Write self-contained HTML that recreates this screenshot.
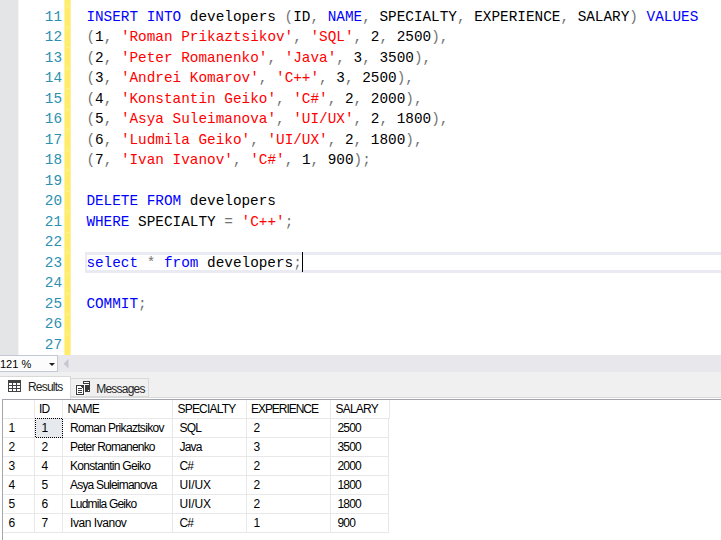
<!DOCTYPE html>
<html><head><meta charset="utf-8">
<style>
html,body{margin:0;padding:0;}
body{width:721px;height:540px;overflow:hidden;position:relative;background:#fff;font-family:"Liberation Sans",sans-serif;}
.a{position:absolute;}
#gut{left:0;top:0;width:19px;height:355px;background:linear-gradient(to right,#e4e5e7 18px,#f4f5f5 18px);}
#yb{left:64px;top:0;width:7px;height:355px;background:linear-gradient(to right,#fff3a6 0,#fff3a6 1px,#ffec6a 1px,#ffec6a 6px,#fff1a0 6px);overflow:hidden;}
.sep{position:absolute;left:0;width:7px;height:1px;background:#ffef92;}
.ln{position:absolute;left:0;width:62px;text-align:right;font-family:"Liberation Mono",monospace;font-size:14.36px;color:#2b91af;height:20.5px;line-height:20.5px;white-space:pre;}
.cl{position:absolute;left:86.4px;font-family:"Liberation Mono",monospace;font-size:14.36px;color:#000;height:20.5px;line-height:20.5px;white-space:pre;}
.k{color:#0000ff}.s{color:#ff0000}.g{color:#747474}
#cur{left:85px;top:252px;width:640px;height:15px;border:2px solid #eaeaf2;border-top-width:3px;border-bottom-width:3px;}
#caret{left:302px;top:252px;width:1px;height:20px;background:#000;}
#zb{left:0;top:355px;width:721px;height:17px;background:#e8e8ec;}
#zc{left:-1px;top:355px;width:57px;height:15px;border:1px solid #c2c8d8;background:#fcfcfc;}
#zt{position:absolute;left:0px;top:3px;font-size:11px;line-height:11px;color:#000;white-space:pre;}
#tabr{left:0;top:376px;width:71px;height:23px;background:#fff;border-top:1px solid #d9d9d9;border-right:1px solid #d9d9d9;box-sizing:border-box;}
#tabline{left:71px;top:397px;width:650px;height:2px;background:#fff;border-top:1px solid #dadada;box-sizing:border-box;}
#tabm{left:70px;top:378px;width:79px;height:19px;background:#f0f0f0;border:1px solid #d9d9d9;box-sizing:border-box;}
.tt{font-size:12px;line-height:12px;color:#1e1e1e;white-space:pre;letter-spacing:-0.8px;}
.gt{font-size:12px;line-height:12px;color:#000;white-space:pre;letter-spacing:-0.8px;}
.gl{background:#e8e8e8;}
#sel{left:35px;top:418px;width:26px;height:18px;background:#e6e9ee;border:1px dotted #000;}

#bot{left:0;top:372px;width:721px;height:168px;background:#f0f0f0;}
#grid{left:0;top:399px;width:721px;height:141px;background:#fff;border-top:1px solid #a4a6ad;box-sizing:border-box;}
#gfix{left:0;top:399px;width:2px;height:1px;background:#fff;}
</style></head><body>
<div class="a" id="gut"></div>
<div class="a" id="cur"></div>
<div class="a" id="yb"><div class="sep" style="top:6.0px"></div><div class="sep" style="top:26.5px"></div><div class="sep" style="top:47.0px"></div><div class="sep" style="top:67.5px"></div><div class="sep" style="top:88.0px"></div><div class="sep" style="top:108.5px"></div><div class="sep" style="top:129.0px"></div><div class="sep" style="top:149.5px"></div><div class="sep" style="top:170.0px"></div><div class="sep" style="top:190.5px"></div><div class="sep" style="top:211.0px"></div><div class="sep" style="top:231.5px"></div><div class="sep" style="top:252.0px"></div><div class="sep" style="top:272.5px"></div><div class="sep" style="top:293.0px"></div><div class="sep" style="top:313.5px"></div><div class="sep" style="top:334.0px"></div><div class="sep" style="top:354.5px"></div></div>
<div class="ln" style="top:7.00px">11</div>
<div class="cl" style="top:7.00px"><span class="k">INSERT INTO</span> developers <span class="g">(</span>ID<span class="g">,</span> <span class="k">NAME</span><span class="g">,</span> SPECIALTY<span class="g">,</span> EXPERIENCE<span class="g">,</span> SALARY<span class="g">)</span> <span class="k">VALUES</span></div>
<div class="ln" style="top:27.00px">12</div>
<div class="cl" style="top:27.00px"><span class="g">(</span>1<span class="g">,</span> <span class="s">'Roman Prikaztsikov'</span><span class="g">,</span> <span class="s">'SQL'</span><span class="g">,</span> 2<span class="g">,</span> 2500<span class="g">),</span></div>
<div class="ln" style="top:48.00px">13</div>
<div class="cl" style="top:48.00px"><span class="g">(</span>2<span class="g">,</span> <span class="s">'Peter Romanenko'</span><span class="g">,</span> <span class="s">'Java'</span><span class="g">,</span> 3<span class="g">,</span> 3500<span class="g">),</span></div>
<div class="ln" style="top:68.00px">14</div>
<div class="cl" style="top:68.00px"><span class="g">(</span>3<span class="g">,</span> <span class="s">'Andrei Komarov'</span><span class="g">,</span> <span class="s">'C++'</span><span class="g">,</span> 3<span class="g">,</span> 2500<span class="g">),</span></div>
<div class="ln" style="top:89.00px">15</div>
<div class="cl" style="top:89.00px"><span class="g">(</span>4<span class="g">,</span> <span class="s">'Konstantin Geiko'</span><span class="g">,</span> <span class="s">'C#'</span><span class="g">,</span> 2<span class="g">,</span> 2000<span class="g">),</span></div>
<div class="ln" style="top:109.00px">16</div>
<div class="cl" style="top:109.00px"><span class="g">(</span>5<span class="g">,</span> <span class="s">'Asya Suleimanova'</span><span class="g">,</span> <span class="s">'UI/UX'</span><span class="g">,</span> 2<span class="g">,</span> 1800<span class="g">),</span></div>
<div class="ln" style="top:130.00px">17</div>
<div class="cl" style="top:130.00px"><span class="g">(</span>6<span class="g">,</span> <span class="s">'Ludmila Geiko'</span><span class="g">,</span> <span class="s">'UI/UX'</span><span class="g">,</span> 2<span class="g">,</span> 1800<span class="g">),</span></div>
<div class="ln" style="top:150.00px">18</div>
<div class="cl" style="top:150.00px"><span class="g">(</span>7<span class="g">,</span> <span class="s">'Ivan Ivanov'</span><span class="g">,</span> <span class="s">'C#'</span><span class="g">,</span> 1<span class="g">,</span> 900<span class="g">);</span></div>
<div class="ln" style="top:171.00px">19</div>
<div class="ln" style="top:191.00px">20</div>
<div class="cl" style="top:191.00px"><span class="k">DELETE FROM</span> developers</div>
<div class="ln" style="top:212.00px">21</div>
<div class="cl" style="top:212.00px"><span class="k">WHERE</span> SPECIALTY <span class="g">=</span> <span class="s">'C++'</span><span class="g">;</span></div>
<div class="ln" style="top:232.00px">22</div>
<div class="ln" style="top:253.00px">23</div>
<div class="cl" style="top:253.00px"><span class="k">select</span> <span class="g">*</span> <span class="k">from</span> developers<span class="g">;</span></div>
<div class="ln" style="top:273.00px">24</div>
<div class="ln" style="top:294.00px">25</div>
<div class="cl" style="top:294.00px"><span class="k">COMMIT</span><span class="g">;</span></div>
<div class="ln" style="top:314.00px">26</div>
<div class="ln" style="top:335.00px">27</div>
<div class="a" id="caret"></div>
<div class="a" id="zb"></div>
<div class="a" id="zc"><span id="zt">121 %</span><svg class="a" style="left:49px;top:7px" width="6" height="3"><path d="M0 0H6L3 3Z" fill="#1e1e1e"/></svg></div>
<svg class="a" style="left:63px;top:359px" width="6" height="10"><path d="M5.5 0V9.5L0.5 4.75Z" fill="#c6c7cf"/></svg>
<div class="a" id="bot"></div>
<div class="a" id="tabr"></div>
<div class="a" id="tabm"></div>
<div class="a" id="tabline"></div>
<svg class="a" style="left:8px;top:380px" width="13" height="12" shape-rendering="crispEdges"><rect x="0" y="0" width="13" height="12" fill="#424242"/><rect x="1" y="3" width="3" height="2" fill="#fff"/><rect x="5" y="3" width="3" height="2" fill="#fff"/><rect x="9" y="3" width="3" height="2" fill="#fff"/><rect x="1" y="6" width="3" height="2" fill="#fff"/><rect x="5" y="6" width="3" height="2" fill="#fff"/><rect x="9" y="6" width="3" height="2" fill="#fff"/><rect x="1" y="9" width="3" height="2" fill="#fff"/><rect x="5" y="9" width="3" height="2" fill="#fff"/><rect x="9" y="9" width="3" height="2" fill="#fff"/></svg>
<div class="a tt" style="left:28px;top:381px">Results</div>
<svg class="a" style="left:74px;top:379px" width="18" height="18" shape-rendering="crispEdges"><rect x="9" y="2" width="7" height="11" fill="#3a3a3a"/><rect x="10" y="3" width="5" height="1" fill="#fff"/><rect x="10" y="5" width="5" height="1" fill="#fff"/><rect x="14" y="11" width="1" height="1" fill="#fff"/><rect x="1" y="5" width="10" height="12" fill="#f8f8f8"/><rect x="2" y="6" width="8" height="10" fill="#3a3a3a"/><rect x="3" y="7" width="6" height="8" fill="#fff"/><rect x="7" y="7" width="2" height="1" fill="#3a3a3a"/><rect x="8" y="8" width="1" height="1" fill="#3a3a3a"/><rect x="4" y="9" width="4" height="1" fill="#3a3a3a"/><rect x="4" y="11" width="4" height="1" fill="#3a3a3a"/><rect x="4" y="13" width="4" height="1" fill="#3a3a3a"/></svg>
<div class="a tt" style="left:96.3px;top:383px">Messages</div>
<div class="a" id="grid"></div>
<div class="a" style="left:2px;top:399px;width:1px;height:141px;background:#a4a6ad"></div>
<div class="a" id="gfix"></div>
<div class="a gl" style="left:34px;top:400px;width:1px;height:133px"></div>
<div class="a gl" style="left:62px;top:400px;width:1px;height:133px"></div>
<div class="a gl" style="left:172px;top:400px;width:1px;height:133px"></div>
<div class="a gl" style="left:246px;top:400px;width:1px;height:133px"></div>
<div class="a gl" style="left:330px;top:400px;width:1px;height:133px"></div>
<div class="a gl" style="left:389px;top:400px;width:1px;height:19px"></div>
<div class="a gl" style="left:388px;top:418px;width:1px;height:115px"></div>
<div class="a gl" style="left:3px;top:418px;width:386px;height:1px"></div>
<div class="a gl" style="left:3px;top:437px;width:386px;height:1px"></div>
<div class="a gl" style="left:3px;top:456px;width:386px;height:1px"></div>
<div class="a gl" style="left:3px;top:475px;width:386px;height:1px"></div>
<div class="a gl" style="left:3px;top:494px;width:386px;height:1px"></div>
<div class="a gl" style="left:3px;top:513px;width:386px;height:1px"></div>
<div class="a gl" style="left:3px;top:532px;width:386px;height:1px"></div>
<div class="a" style="left:36px;top:419px;width:26px;height:18px;background:#e6e9ee"></div>
<svg class="a" style="left:35px;top:418px" width="28" height="20" shape-rendering="crispEdges" fill="#000"><rect x="0" y="0" width="1" height="1"/><rect x="0" y="2" width="1" height="1"/><rect x="0" y="4" width="1" height="1"/><rect x="0" y="6" width="1" height="1"/><rect x="0" y="8" width="1" height="1"/><rect x="0" y="10" width="1" height="1"/><rect x="0" y="12" width="1" height="1"/><rect x="0" y="14" width="1" height="1"/><rect x="0" y="16" width="1" height="1"/><rect x="0" y="18" width="1" height="1"/><rect x="1" y="19" width="1" height="1"/><rect x="2" y="0" width="1" height="1"/><rect x="3" y="19" width="1" height="1"/><rect x="4" y="0" width="1" height="1"/><rect x="5" y="19" width="1" height="1"/><rect x="6" y="0" width="1" height="1"/><rect x="7" y="19" width="1" height="1"/><rect x="8" y="0" width="1" height="1"/><rect x="9" y="19" width="1" height="1"/><rect x="10" y="0" width="1" height="1"/><rect x="11" y="19" width="1" height="1"/><rect x="12" y="0" width="1" height="1"/><rect x="13" y="19" width="1" height="1"/><rect x="14" y="0" width="1" height="1"/><rect x="15" y="19" width="1" height="1"/><rect x="16" y="0" width="1" height="1"/><rect x="17" y="19" width="1" height="1"/><rect x="18" y="0" width="1" height="1"/><rect x="19" y="19" width="1" height="1"/><rect x="20" y="0" width="1" height="1"/><rect x="21" y="19" width="1" height="1"/><rect x="22" y="0" width="1" height="1"/><rect x="23" y="19" width="1" height="1"/><rect x="24" y="0" width="1" height="1"/><rect x="25" y="19" width="1" height="1"/><rect x="26" y="0" width="1" height="1"/><rect x="27" y="1" width="1" height="1"/><rect x="27" y="3" width="1" height="1"/><rect x="27" y="5" width="1" height="1"/><rect x="27" y="7" width="1" height="1"/><rect x="27" y="9" width="1" height="1"/><rect x="27" y="11" width="1" height="1"/><rect x="27" y="13" width="1" height="1"/><rect x="27" y="15" width="1" height="1"/><rect x="27" y="17" width="1" height="1"/><rect x="27" y="19" width="1" height="1"/></svg>
<div class="a gt" style="left:39px;top:403px">ID</div>
<div class="a gt" style="left:67.5px;top:403px">NAME</div>
<div class="a gt" style="left:177.5px;top:403px">SPECIALTY</div>
<div class="a gt" style="left:251px;top:403px;letter-spacing:-1.05px">EXPERIENCE</div>
<div class="a gt" style="left:335.5px;top:403px">SALARY</div>
<div class="a gt" style="left:8.5px;top:422px">1</div>
<div class="a gt" style="left:41.5px;top:422px">1</div>
<div class="a gt" style="left:70px;top:422px;letter-spacing:-0.68px">Roman Prikaztsikov</div>
<div class="a gt" style="left:179.5px;top:422px">SQL</div>
<div class="a gt" style="left:253.5px;top:422px">2</div>
<div class="a gt" style="left:337.5px;top:422px">2500</div>
<div class="a gt" style="left:8.5px;top:441px">2</div>
<div class="a gt" style="left:41.5px;top:441px">2</div>
<div class="a gt" style="left:70px;top:441px">Peter Romanenko</div>
<div class="a gt" style="left:179.5px;top:441px">Java</div>
<div class="a gt" style="left:253.5px;top:441px">3</div>
<div class="a gt" style="left:337.5px;top:441px">3500</div>
<div class="a gt" style="left:8.5px;top:460px">3</div>
<div class="a gt" style="left:41.5px;top:460px">4</div>
<div class="a gt" style="left:70px;top:460px;letter-spacing:-0.7px">Konstantin Geiko</div>
<div class="a gt" style="left:179.5px;top:460px">C#</div>
<div class="a gt" style="left:253.5px;top:460px">2</div>
<div class="a gt" style="left:337.5px;top:460px">2000</div>
<div class="a gt" style="left:8.5px;top:479px">4</div>
<div class="a gt" style="left:41.5px;top:479px">5</div>
<div class="a gt" style="left:70px;top:479px">Asya Suleimanova</div>
<div class="a gt" style="left:179.5px;top:479px;letter-spacing:-0.15px">UI/UX</div>
<div class="a gt" style="left:253.5px;top:479px">2</div>
<div class="a gt" style="left:337.5px;top:479px">1800</div>
<div class="a gt" style="left:8.5px;top:498px">5</div>
<div class="a gt" style="left:41.5px;top:498px">6</div>
<div class="a gt" style="left:70px;top:498px">Ludmila Geiko</div>
<div class="a gt" style="left:179.5px;top:498px;letter-spacing:-0.15px">UI/UX</div>
<div class="a gt" style="left:253.5px;top:498px">2</div>
<div class="a gt" style="left:337.5px;top:498px">1800</div>
<div class="a gt" style="left:8.5px;top:517px">6</div>
<div class="a gt" style="left:41.5px;top:517px">7</div>
<div class="a gt" style="left:70px;top:517px;letter-spacing:-0.45px">Ivan Ivanov</div>
<div class="a gt" style="left:179.5px;top:517px">C#</div>
<div class="a gt" style="left:253.5px;top:517px">1</div>
<div class="a gt" style="left:337.5px;top:517px">900</div>
</body></html>
